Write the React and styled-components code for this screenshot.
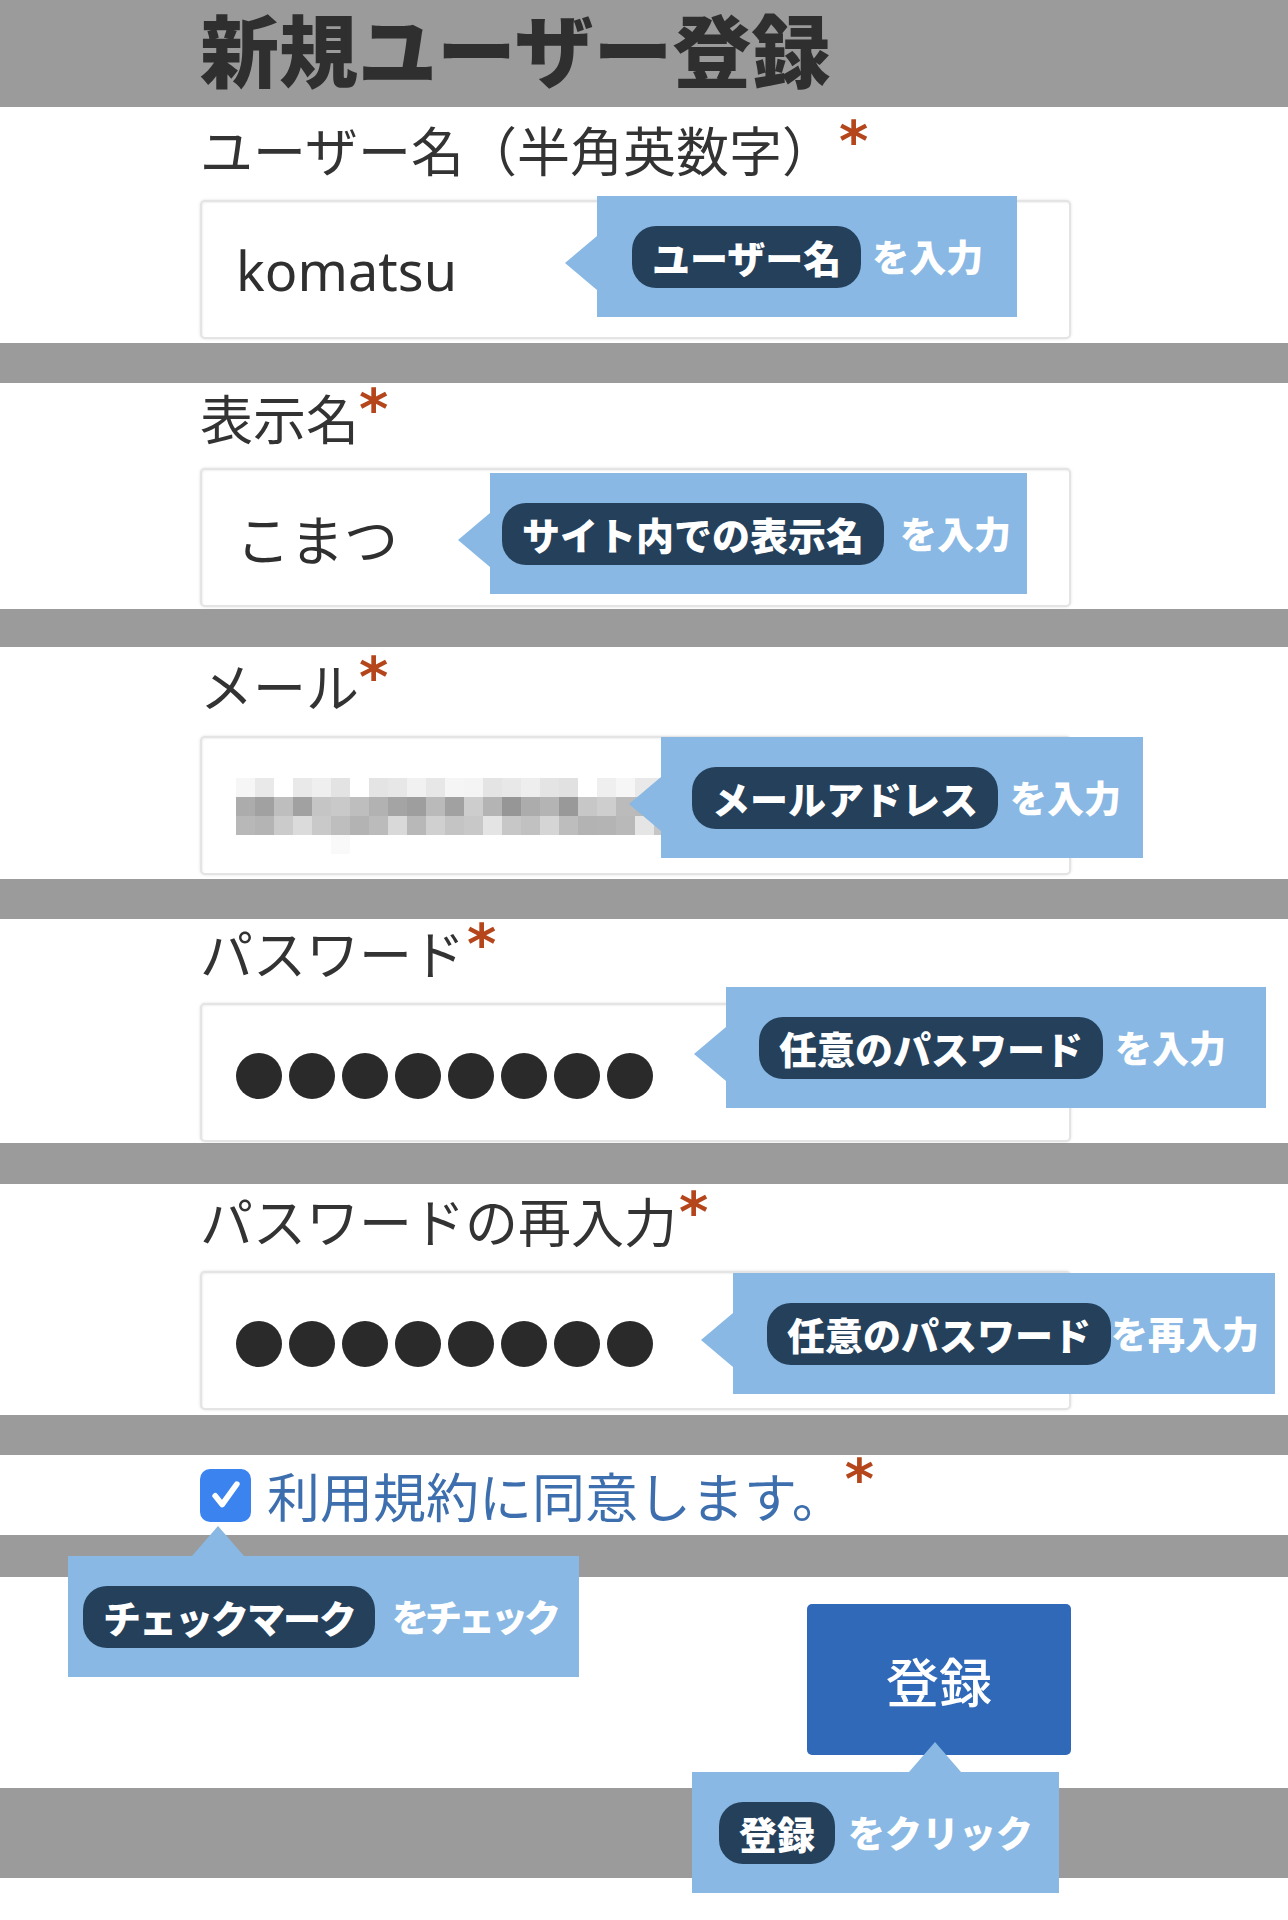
import React from 'react'
import styled, { createGlobalStyle } from 'styled-components'

const GlobalStyle = createGlobalStyle`
  html, body {
    margin: 0;
    padding: 0;
    background: #ffffff;
  }
  body {
    font-family: "Noto Sans CJK JP", "Noto Sans", sans-serif;
    color: #333333;
  }
`

const BLUE = '#88b8e3'

// pixelated (blurred) e-mail address
const makeMosaic = () => {
  let seed = 17
  const rnd = () => {
    seed = (seed * 9301 + 49297) % 233280
    return seed / 233280
  }
  const rows = [
    { base: 236, spread: 12, prob: 0.9 },
    { base: 178, spread: 30, prob: 1 },
    { base: 204, spread: 26, prob: 1 },
    { base: 243, spread: 8, prob: 0.3 },
  ]
  const cells = []
  rows.forEach((row, r) => {
    for (let c = 0; c < 23; c++) {
      if (rnd() > row.prob) continue
      const v = Math.round(row.base + (rnd() - 0.5) * row.spread * 2)
      cells.push({ x: c * 19, y: r * 19, v: Math.min(250, v) })
    }
  })
  return cells
}
const mosaic = makeMosaic()

const PasswordDots = () => (
  <Dots>{Array.from({ length: 8 }).map((_, i) => <Dot key={i} />)}</Dots>
)

export default function App() {
  return (
    <Page>
      <GlobalStyle />
      <Header>
        <Title>新規ユーザー登録</Title>
      </Header>

      <Section $h={236} $pt={10}>
        <Label>ユーザー名（半角英数字）<Req $ml={4}>*</Req></Label>
        <Field>
          <InputBox>komatsu</InputBox>
          <Callout $x={397} $y={-4} $pl={35} $pr={34} $gap={11}>
            <Pill>ユーザー名</Pill>
            <Hint>を入力</Hint>
          </Callout>
        </Field>
      </Section>
      <Band />

      <Section $h={226} $pt={2}>
        <Label>表示名<Req $ml={0}>*</Req></Label>
        <Field>
          <InputBox>こまつ</InputBox>
          <Callout $x={290} $y={5} $pl={12} $pr={16} $gap={16}>
            <Pill>サイト内での表示名</Pill>
            <Hint>を入力</Hint>
          </Callout>
        </Field>
      </Section>
      <Band $h={38} />

      <Section $h={232} $pt={6}>
        <Label>メール<Req $ml={0}>*</Req></Label>
        <Field>
          <InputBox>
            <Mosaic width="437" height="76" viewBox="0 0 437 76">
              {mosaic.map((m, i) => (
                <rect key={i} x={m.x} y={m.y} width="19" height="19" fill={`rgb(${m.v},${m.v},${m.v})`} />
              ))}
            </Mosaic>
          </InputBox>
          <Callout $x={461} $y={1} $pl={31} $pr={22} $gap={12}>
            <Pill>メールアドレス</Pill>
            <Hint>を入力</Hint>
          </Callout>
        </Field>
      </Section>
      <Band />

      <Section $h={224} $pt={1}>
        <Label>パスワード<Req $ml={2}>*</Req></Label>
        <Field>
          <InputBox><PasswordDots /></InputBox>
          <Callout $x={526} $y={-16} $pl={33} $pr={40} $gap={12}>
            <Pill>任意のパスワード</Pill>
            <Hint>を入力</Hint>
          </Callout>
        </Field>
      </Section>
      <Band $h={41} />

      <Section $h={231} $pt={4}>
        <Label>パスワードの再入力<Req $ml={2}>*</Req></Label>
        <Field>
          <InputBox><PasswordDots /></InputBox>
          <Callout $x={533} $y={2} $pl={34} $pr={16} $gap={0}>
            <Pill>任意のパスワード</Pill>
            <Hint>を再入力</Hint>
          </Callout>
        </Field>
      </Section>
      <Band />

      <AgreeRow>
        <CheckBox>
          <svg width="40" height="40" viewBox="0 0 24 24" fill="none">
            <path d="M5.5 12.5l4.2 5.2L18.5 5.5" stroke="#ffffff" strokeWidth="3.4" strokeLinecap="round" strokeLinejoin="round" />
          </svg>
        </CheckBox>
        <AgreeText>利用規約に同意します。</AgreeText>
        <Req $ml={0}>*</Req>
        <Callout $x={68} $y={101} $pl={15} $pr={22} $gap={17} $point="up" $tip={150}>
          <Pill $ls={-2}>チェックマーク</Pill>
          <Hint $ls={-4}>をチェック</Hint>
        </Callout>
      </AgreeRow>
      <Band $h={42} />

      <SubmitRow>
        <SubmitWrap>
          <SubmitButton type="button">登録</SubmitButton>
          <Callout $x={-115} $y={168} $pl={27} $pr={26} $gap={13} $point="up" $tip={243}>
            <Pill>登録</Pill>
            <Hint>をクリック</Hint>
          </Callout>
        </SubmitWrap>
      </SubmitRow>
      <Band $h={90} />
      <Footer />
    </Page>
  )
}

const Page = styled.div`
  width: 1288px;
  min-height: 1920px;
  background: #ffffff;
  display: flex;
  flex-direction: column;
`

const Header = styled.header`
  height: 107px;
  background: #9b9b9b;
  padding-left: 200px;
  box-sizing: border-box;
  flex-shrink: 0;
`

const Title = styled.h1`
  margin: 0;
  font-size: 79px;
  line-height: 96px;
  font-weight: 900;
  color: #2f2f2f;
  letter-spacing: 0;
`

const Section = styled.section`
  background: #ffffff;
  padding: ${p => p.$pt}px 217px 0 200px;
  height: ${p => p.$h}px;
  box-sizing: border-box;
  display: flex;
  flex-direction: column;
  flex-shrink: 0;
`

const Band = styled.div`
  height: ${p => p.$h || 40}px;
  background: #9b9b9b;
  flex-shrink: 0;
`

const Label = styled.div`
  display: flex;
  align-items: flex-start;
  font-size: 53px;
  line-height: 64px;
  height: 64px;
  font-weight: 400;
  color: #333333;
  margin-bottom: 19px;
`

const Req = styled.span`
  font-family: "DejaVu Sans", sans-serif;
  font-weight: 700;
  font-size: 56px;
  line-height: 1;
  color: #b5461c;
  margin-left: ${p => p.$ml}px;
  margin-top: -4px;
  align-self: flex-start;
`

const Field = styled.div`
  position: relative;
`

const InputBox = styled.div`
  height: 139px;
  box-sizing: border-box;
  border: 2px solid #e4e4e4;
  border-radius: 5px;
  box-shadow: 0 0 3px rgba(0, 0, 0, 0.12), inset 1px 1px 2px rgba(0, 0, 0, 0.06);
  background: #ffffff;
  padding: 0 34px;
  display: flex;
  align-items: center;
  font-family: "Noto Sans", "Noto Sans CJK JP", sans-serif;
  font-size: 54px;
  color: #2f2f2f;
`

const Mosaic = styled.svg`
  display: block;
  margin-top: 20px;
  filter: blur(0.6px);
`

const Dots = styled.div`
  display: flex;
  gap: 7px;
  margin-top: 6px;
`

const Dot = styled.span`
  width: 46px;
  height: 46px;
  border-radius: 50%;
  background: #2a2a2a;
`

const Callout = styled.div`
  position: absolute;
  left: ${p => p.$x}px;
  top: ${p => p.$y}px;
  height: 121px;
  box-sizing: border-box;
  padding: 0 ${p => p.$pr}px 0 ${p => p.$pl}px;
  display: flex;
  align-items: center;
  gap: ${p => p.$gap}px;
  background: ${BLUE};
  white-space: nowrap;
  z-index: 2;

  &::before {
    content: '';
    position: absolute;
    border-style: solid;
    ${p => p.$point === 'up'
      ? `
        top: -30px;
        left: ${p.$tip - 26}px;
        border-width: 0 26px 30px 26px;
        border-color: transparent transparent ${BLUE} transparent;
      `
      : `
        left: -32px;
        top: 40px;
        border-width: 27px 32px 27px 0;
        border-color: transparent ${BLUE} transparent transparent;
      `}
  }
`

const Pill = styled.span`
  height: 62px;
  padding: 0 20px;
  border-radius: 24px;
  background: #24405b;
  color: #ffffff;
  display: flex;
  align-items: center;
  font-size: 38px;
  font-weight: 900;
  line-height: 1;
  letter-spacing: ${p => p.$ls || 0}px;
`

const Hint = styled.span`
  color: #ffffff;
  font-size: 37px;
  font-weight: 900;
  line-height: 1;
  letter-spacing: ${p => p.$ls || 0}px;
`

const AgreeRow = styled.section`
  position: relative;
  height: 80px;
  padding-left: 200px;
  display: flex;
  align-items: center;
  background: #ffffff;
  flex-shrink: 0;
`

const CheckBox = styled.span`
  width: 51px;
  height: 53px;
  border-radius: 10px;
  background: #3b83ee;
  display: flex;
  align-items: center;
  justify-content: center;
  margin-right: 16px;
  flex-shrink: 0;
`

const AgreeText = styled.span`
  font-size: 53px;
  line-height: 64px;
  color: #3d6fae;
`

const SubmitRow = styled.section`
  height: 211px;
  box-sizing: border-box;
  padding: 27px 217px 0 0;
  display: flex;
  justify-content: flex-end;
  align-items: flex-start;
  background: #ffffff;
  flex-shrink: 0;
`

const SubmitWrap = styled.div`
  position: relative;
`

const SubmitButton = styled.button`
  width: 264px;
  height: 151px;
  border: none;
  border-radius: 5px;
  background: #3169b9;
  color: #ffffff;
  font-family: "Noto Sans CJK JP", sans-serif;
  font-size: 53px;
  font-weight: 500;
  cursor: pointer;
`

const Footer = styled.div`
  flex: 1;
  background: #ffffff;
`
